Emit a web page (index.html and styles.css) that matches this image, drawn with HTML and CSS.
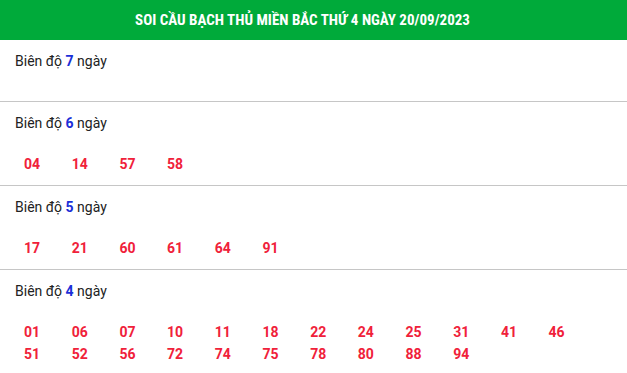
FILE: index.html
```html
<!DOCTYPE html>
<html lang="vi">
<head>
<meta charset="utf-8">
<link rel="stylesheet" href="styles.css">
</head>
<body>
<div class="box">
  <h2 class="title">SOI CẦU BẠCH THỦ MIỀN BẮC THỨ 4 NGÀY 20/09/2023</h2>
  <div class="sec">
    <div class="label">Biên độ <b>7</b> ngày</div>
    <div class="nums"></div>
  </div>
  <div class="sec">
    <div class="label">Biên độ <b>6</b> ngày</div>
    <div class="nums"><span>04</span><span>14</span><span>57</span><span>58</span></div>
  </div>
  <div class="sec">
    <div class="label">Biên độ <b>5</b> ngày</div>
    <div class="nums"><span>17</span><span>21</span><span>60</span><span>61</span><span>64</span><span>91</span></div>
  </div>
  <div class="sec">
    <div class="label">Biên độ <b>4</b> ngày</div>
    <div class="nums"><span>01</span><span>06</span><span>07</span><span>10</span><span>11</span><span>18</span><span>22</span><span>24</span><span>25</span><span>31</span><span>41</span><span>46</span><span>51</span><span>52</span><span>56</span><span>72</span><span>74</span><span>75</span><span>78</span><span>80</span><span>88</span><span>94</span></div>
  </div>
</div>
</body>
</html>
```
FILE: styles.css
```css
html, body { margin: 0; padding: 0; background: #fff; }
body { font-family: Roboto, "Liberation Sans", sans-serif; color: #222; }
.box { width: 627px; }
.title {
  margin: 0;
  height: 40px;
  line-height: 40px;
  background: #00aa3a;
  color: #fff;
  font-size: 15px;
  font-weight: 700;
  text-align: center;
  padding-right: 22px;
  font-stretch: condensed;
}
.sec { padding: 10px 0 10px; border-bottom: 1px solid #c6c6c6; }
.label { padding-left: 15px; font-size: 14px; line-height: 22px; color: #222; }
.label b { color: #1b2fd8; font-weight: 700; }
.nums {
  margin-top: 19px;
  padding-left: 24px;
  display: grid;
  grid-template-columns: repeat(12, 47.7px);
  line-height: 22px;
}
.nums span { color: #f0213a; font-weight: 700; font-size: 14px; }
```
